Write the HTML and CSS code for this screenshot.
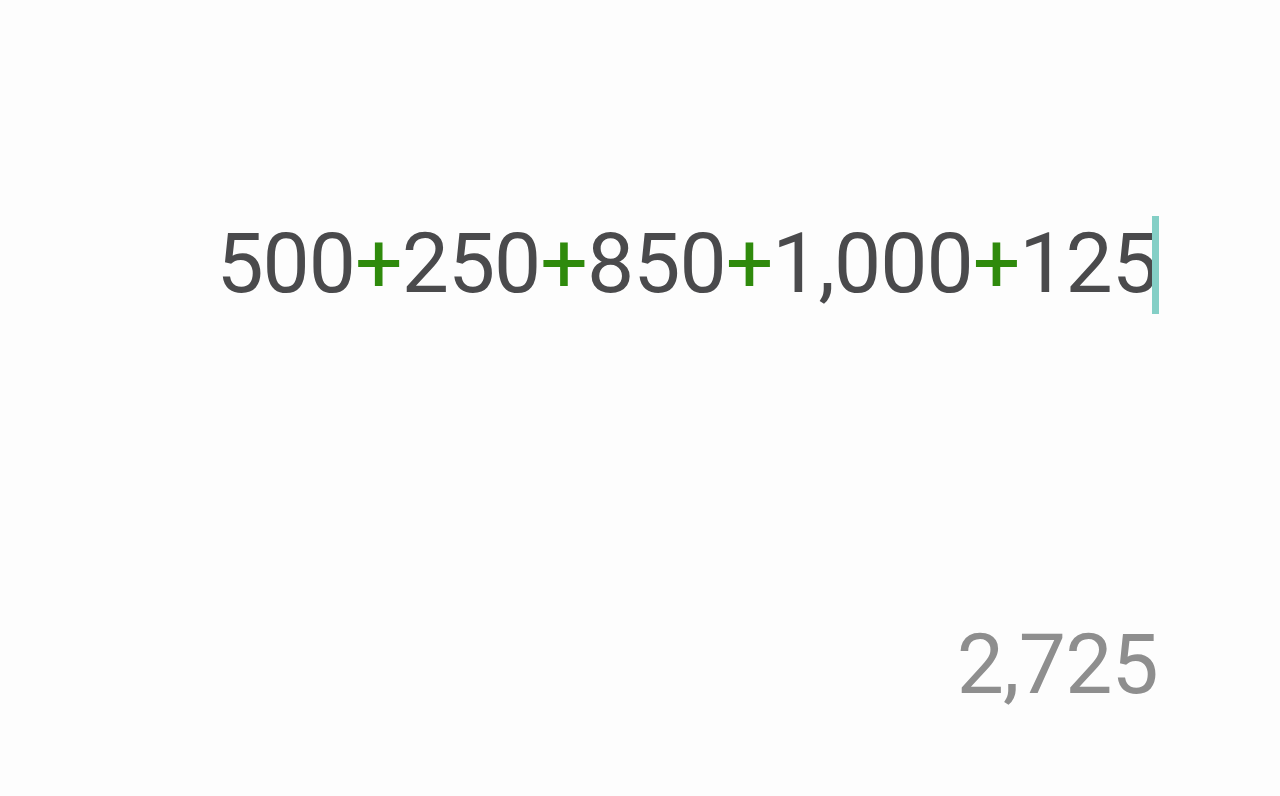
FILE: index.html
```html
<!DOCTYPE html>
<html>
<head>
<meta charset="utf-8">
<link rel="stylesheet" href="styles.css">
</head>
<body>
<main class="display">
  <div class="formula"><span class="expr"><span class="num">500</span><span class="op">+</span><span class="num">250</span><span class="op">+</span><span class="num">850</span><span class="op">+</span><span class="num">1,000</span><span class="op">+</span><span class="num">125</span></span><span class="cursor"></span></div>
  <div class="result">2,725</div>
</main>
</body>
</html>
```
FILE: styles.css
```css
html, body {
  margin: 0;
  padding: 0;
  background: #fdfdfd;
  width: 1280px;
  height: 796px;
  overflow: hidden;
}
.display {
  display: flex;
  flex-direction: column;
  align-items: flex-end;
  padding: 216px 122px 0 0;
  font-family: Roboto, "Noto Sans", sans-serif;
}
.formula {
  display: flex;
  align-items: flex-start;
  height: 98px;
  position: relative;
}
.expr {
  font-size: 84px;
  line-height: 96px;
  letter-spacing: -1px;
  color: #4a4a4c;
}
.op {
  color: #2f8a0c;
}
.cursor {
  position: absolute;
  right: -1px;
  top: 0;
  width: 7px;
  height: 98px;
  background: #84cfc6;
}
.result {
  margin-top: 305px;
  font-size: 84px;
  line-height: 92px;
  letter-spacing: -0.8px;
  color: #8e8e8e;
}
```
